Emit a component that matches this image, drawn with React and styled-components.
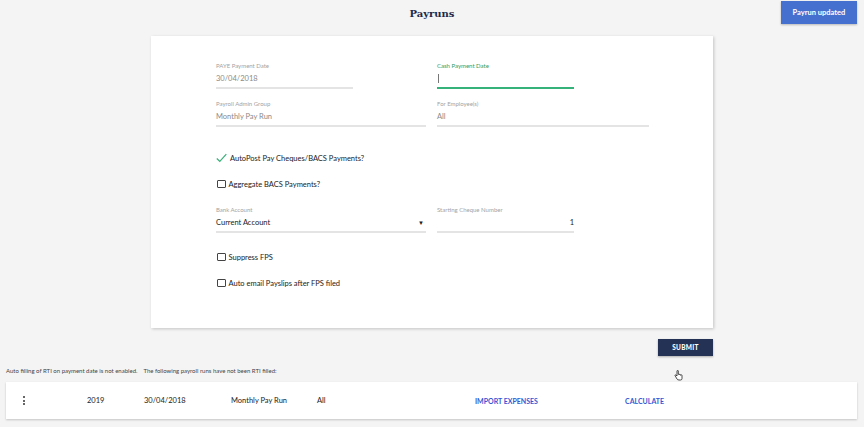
import React from "react";
import styled, { createGlobalStyle } from "styled-components";

const GlobalStyle = createGlobalStyle`
  body {
    margin: 0;
    background: #f4f4f4;
    font-family: Lato, "Open Sans", sans-serif;
    color: #222;
  }
`;

const Page = styled.div`
  position: relative;
  width: 864px;
  height: 427px;
  overflow: hidden;
`;

const Header = styled.header`
  height: 36px;
  display: flex;
  justify-content: center;
`;

const Title = styled.h1`
  margin: 0;
  font-family: "DejaVu Serif", serif;
  font-weight: 700;
  font-size: 10px;
  line-height: 28px;
  color: #1f2a47;
`;

const Toast = styled.div`
  position: absolute;
  top: 1px;
  right: 7px;
  width: 76px;
  height: 23px;
  display: flex;
  align-items: center;
  justify-content: center;
  background: #4570cf;
  color: #fff;
  font-size: 7.5px;
  font-weight: 700;
  box-shadow: 0 1px 2px rgba(0, 0, 0, 0.25);
`;

const Card = styled.section`
  width: 562px;
  margin: 0 auto;
  background: #fff;
  box-shadow: 1px 1px 3px rgba(0, 0, 0, 0.2);
  padding: 26px 0 32px 65px;
  box-sizing: border-box;
`;

const FieldRow = styled.div`
  display: grid;
  grid-template-columns: 210px 212px;
  column-gap: 11px;
  margin-top: ${(p) => p.$top || 0}px;
`;

const Field = styled.div`
  width: ${(p) => (p.$narrow ? "137px" : "auto")};
  border-bottom: 2px solid ${(p) => (p.$active ? "#35b27a" : "#e4e4e4")};
`;

const Label = styled.div`
  font-size: 6px;
  line-height: 8px;
  color: ${(p) => (p.$active ? "#2a9e66" : "#a3a3a3")};
`;

const Value = styled.div`
  height: 17px;
  display: flex;
  align-items: center;
  justify-content: ${(p) => (p.$right ? "flex-end" : "space-between")};
  font-size: 7.5px;
  color: ${(p) => (p.$dark ? "#222" : "#8a8a8a")};
`;

const Caret = styled.span`
  width: 1px;
  height: 9px;
  background: #777;
  margin-left: 1px;
`;

const Arrow = styled.span`
  font-size: 6px;
  margin-right: 2px;
  color: #222;
`;

const CheckRow = styled.label`
  display: flex;
  align-items: center;
  height: 26px;
  gap: 3px;
  font-size: 7.5px;
  color: #222;
  margin-top: ${(p) => p.$top || 0}px;
`;

const Box = styled.span`
  width: 6.5px;
  height: 6.5px;
  border: 1.2px solid #444;
  border-radius: 1px;
  margin-left: 1px;
`;

const Actions = styled.div`
  width: 562px;
  margin: 11px auto 0;
  display: flex;
  justify-content: flex-end;
`;

const SubmitButton = styled.button`
  width: 55px;
  height: 17px;
  border: none;
  background: #243355;
  color: #fff;
  font-family: Lato, sans-serif;
  font-size: 6.5px;
  font-weight: 900;
  letter-spacing: 0.3px;
  box-shadow: 0 1px 2px rgba(0, 0, 0, 0.3);
  padding: 0;
`;

const Bottom = styled.div`
  padding: 0 7px 0 6px;
`;

const Notice = styled.p`
  margin: 11px 0 0;
  font-size: 6px;
  line-height: 8px;
  color: #444;
  white-space: pre;
`;

const RunCard = styled.div`
  margin-top: 7px;
  height: 37px;
  background: #fff;
  box-shadow: 0 1px 2px rgba(0, 0, 0, 0.2);
  display: grid;
  grid-template-columns: 81px 57px 87px 86px 158px 150px 1fr;
  align-items: center;
  font-size: 7.5px;
  color: #222;
`;

const Dots = styled.div`
  display: flex;
  flex-direction: column;
  gap: 1.5px;
  padding-left: 17px;
  & > span {
    width: 2px;
    height: 2px;
    border-radius: 50%;
    background: #333;
  }
`;

const Action = styled.span`
  color: #3557d4;
  font-weight: 700;
  font-size: 7px;
`;

const Pointer = styled.svg`
  position: absolute;
  left: 674px;
  top: 370px;
`;

const Check = () => (
  <svg width="11" height="10" viewBox="0 0 11 10">
    <path d="M0.8 5.5 L3.8 8.5 L10.3 1.2" fill="none" stroke="#3bb07a" strokeWidth="1.2" />
  </svg>
);

export default function App() {
  return (
    <Page>
      <GlobalStyle />
      <Header>
        <Title>Payruns</Title>
      </Header>
      <Toast>Payrun updated</Toast>

      <Card>
        <FieldRow>
          <Field $narrow>
            <Label>PAYE Payment Date</Label>
            <Value>30/04/2018</Value>
          </Field>
          <Field $narrow $active>
            <Label $active>Cash Payment Date</Label>
            <Value>
              <Caret />
            </Value>
          </Field>
        </FieldRow>
        <FieldRow $top={11}>
          <Field>
            <Label>Payroll Admin Group</Label>
            <Value>Monthly Pay Run</Value>
          </Field>
          <Field>
            <Label>For Employee(s)</Label>
            <Value>All</Value>
          </Field>
        </FieldRow>

        <CheckRow $top={18}>
          <Check />
          AutoPost Pay Cheques/BACS Payments?
        </CheckRow>
        <CheckRow>
          <Box />
          Aggregate BACS Payments?
        </CheckRow>

        <FieldRow $top={9}>
          <Field>
            <Label>Bank Account</Label>
            <Value $dark>
              Current Account
              <Arrow>▼</Arrow>
            </Value>
          </Field>
          <Field $narrow>
            <Label>Starting Cheque Number</Label>
            <Value $dark $right>
              1
            </Value>
          </Field>
        </FieldRow>

        <CheckRow $top={11}>
          <Box />
          Suppress FPS
        </CheckRow>
        <CheckRow>
          <Box />
          Auto email Payslips after FPS filed
        </CheckRow>
      </Card>

      <Actions>
        <SubmitButton>SUBMIT</SubmitButton>
      </Actions>

      <Bottom>
        <Notice>
          {"Auto filling of RTI on payment date is not enabled.    The following payroll runs have not been RTI filled:"}
        </Notice>
        <RunCard>
          <Dots>
            <span />
            <span />
            <span />
          </Dots>
          <span>2019</span>
          <span>30/04/2018</span>
          <span>Monthly Pay Run</span>
          <span>All</span>
          <Action>IMPORT EXPENSES</Action>
          <Action>CALCULATE</Action>
        </RunCard>
      </Bottom>

      <Pointer width="9" height="11" viewBox="0 0 9 11">
        <path
          d="M3 1 V6 L2 5 Q1 4.5 1 5.5 L3 9 Q3.5 10 5 10 H6.5 Q8 10 8 8.5 V5.5 Q8 4.8 7.3 4.8 Q6.6 4.8 6.6 5.3 Q6.6 4.3 5.8 4.3 Q5 4.3 5 5 Q5 4 4.3 4 V1 Q4.3 0.4 3.7 0.4 Q3 0.4 3 1 Z"
          fill="#fff"
          stroke="#222"
          strokeWidth="0.8"
        />
      </Pointer>
    </Page>
  );
}
